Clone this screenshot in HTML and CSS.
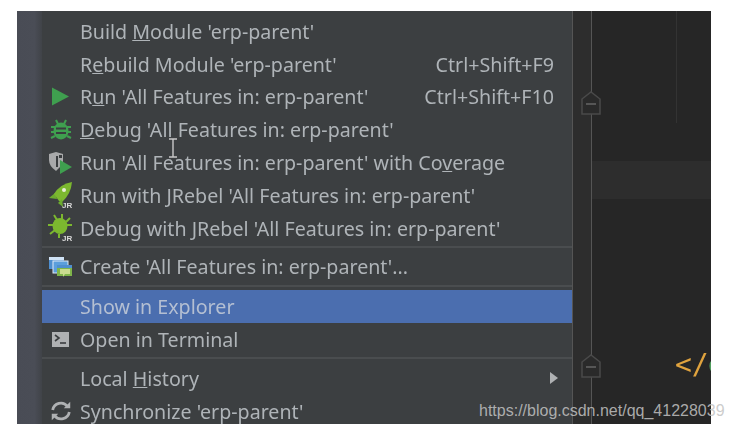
FILE: index.html
```html
<!DOCTYPE html>
<html lang="en">
<head>
    <meta charset="UTF-8">
    <title>Context menu</title>
    <link rel="stylesheet" href="styles.css">
</head>
<body>
    <div class="frame">
        <div class="strip"></div>
        <ul class="menu">
            <li class="row first"><span class="slot"></span><span class="label">Build <u>M</u>odule 'erp-parent'</span></li>
            <li class="row"><span class="slot"></span><span class="label">R<u>e</u>build Module 'erp-parent'</span><span class="keys">Ctrl+Shift+F9</span></li>
            <li class="row">
                <span class="slot"><svg width="26" height="26" viewBox="0 0 26 26"><path d="M4 3.5 L21 12.5 L4 21.5 Z" fill="#3f9f4f"/></svg></span>
                <span class="label">R<u>u</u>n 'All Features in: erp-parent'</span><span class="keys">Ctrl+Shift+F10</span>
            </li>
            <li class="row">
                <span class="slot"><svg width="26" height="26" viewBox="0 0 26 26"><g stroke="#3f9f4f" stroke-width="2" fill="none"><path d="M8 3 L10 7 M18 3 L16 7 M3 10 H7 M23 10 H19 M3 15 H7 M23 15 H19 M3 21 L7 19 M23 21 L19 19"/></g><ellipse cx="13" cy="14" rx="7.5" ry="8.5" fill="#3f9f4f"/><path d="M8 11.5 H18 M8 16 H18" stroke="#3a3d3f" stroke-width="2"/></svg></span>
                <span class="label"><u>D</u>ebug 'All Features in: erp-parent'</span>
            </li>
            <li class="row">
                <span class="slot"><svg width="26" height="26" viewBox="0 0 26 26"><path d="M1 4 L8 2 L15 4 V14 L8 21 Q1 16 1 10 Z" fill="#a8a9aa"/><path d="M11 5 H14 V8 H11 Z" fill="#3a3d3f"/><path d="M10 6 V17 H8 V6 Z" fill="#3a3d3f"/><path d="M12 10 L24 17 L12 24 Z" fill="#3f9f4f"/></svg></span>
                <span class="label">Run 'All Features in: erp-parent' with Co<u>v</u>erage</span>
            </li>
            <li class="row">
                <span class="slot"><svg width="28" height="28" viewBox="0 0 28 28"><path d="M2 17 L8 12 L10 18 Z" fill="#6cab2f"/><path d="M7 13 Q13 3 25 1 Q24 13 15 21 L12 20 Z" fill="#7cb82f"/><path d="M11 22 L15 18 L16 26 Z" fill="#6cab2f"/><circle cx="17" cy="9" r="2" fill="#e8eed8"/><text class="jr" x="15" y="27">JR</text></svg></span>
                <span class="label">Run with JRebel 'All Features in: erp-parent'</span>
            </li>
            <li class="row">
                <span class="slot"><svg width="28" height="28" viewBox="0 0 28 28"><g stroke="#7cb82f" stroke-width="2" fill="none"><path d="M7 1 L10 6 M15 0 V5 M23 4 L19 8 M1 11 H6 M25 11 H20 M3 20 L8 16 M12 24 L12 20"/></g><ellipse cx="13" cy="12" rx="7.5" ry="8" fill="#7cb82f"/><text class="jr" x="15" y="27">JR</text></svg></span>
                <span class="label">Debug with JRebel 'All Features in: erp-parent'</span>
            </li>
            <li class="sep"></li>
            <li class="row">
                <span class="slot"><svg width="26" height="26" viewBox="0 0 26 26"><rect x="1" y="3" width="15" height="12" fill="#4f8fcf"/><rect x="1" y="3" width="15" height="3" fill="#cfe2f5"/><rect x="5" y="7" width="15" height="12" fill="#5c9fdc" stroke="#dfeaf5"/><rect x="9" y="11" width="15" height="11" fill="#7fb54a"/><rect x="9" y="11" width="15" height="3" fill="#4f8fcf"/><path d="M12 15 H22 V20 H17 L15 23 V20 H12 Z" fill="#c9dc8f"/></svg></span>
                <span class="label">Create 'All Features in: erp-parent'...</span>
            </li>
            <li class="sep sep-wide"></li>
            <li class="row active"><span class="slot"></span><span class="label">Show in Explorer</span></li>
            <li class="row">
                <span class="slot"><svg width="26" height="26" viewBox="0 0 26 26"><rect x="4" y="5" width="17" height="15" fill="#afb1b3"/><path d="M7 8 L11 11 L7 14" stroke="#3a3d3f" stroke-width="1.6" fill="none"/><path d="M12 16 H18" stroke="#3a3d3f" stroke-width="1.6"/></svg></span>
                <span class="label">Open in Terminal</span>
            </li>
            <li class="sep"></li>
            <li class="row"><span class="slot"></span><span class="label">Local <u>H</u>istory</span><span class="arrow"></span></li>
            <li class="row">
                <span class="slot"><svg width="24" height="24" viewBox="0 0 26 26"><g stroke="#afb1b3" stroke-width="3" fill="none"><path d="M4 12 A9 9 0 0 1 20 8"/><path d="M22 14 A9 9 0 0 1 6 18"/></g><path d="M16 10 H23 V3 Z M10 16 H3 V23 Z" fill="#afb1b3"/></svg></span>
                <span class="label">Synchronize 'erp-parent'</span>
            </li>
        </ul>
        <div class="fold-gutter"></div>
        <div class="editor">
            <div class="guide"></div>
            <div class="band"></div>
            <div class="code"><span class="tag">&lt;/</span><span class="name">e</span></div>
        </div>
        <svg class="fold fold-top" width="32" height="26" viewBox="0 0 32 26"><path d="M7 9 L16 2 L25 9 V24 H7 Z" fill="#2a2a2a" stroke="#4a4a4a" stroke-width="1.5"/><path d="M11 14 H21" stroke="#666" stroke-width="1.5"/></svg>
        <svg class="fold fold-bottom" width="32" height="26" viewBox="0 0 32 26"><path d="M7 9 L16 2 L25 9 V24 H7 Z" fill="#2a2a2a" stroke="#4a4a4a" stroke-width="1.5"/><path d="M11 14 H21" stroke="#666" stroke-width="1.5"/></svg>
        <svg class="ibeam" width="10" height="20" viewBox="0 0 10 20"><path d="M1 1 H9 M5 1 V19 M1 19 H9" stroke="#c8c8c8" stroke-width="1.4" fill="none"/></svg>
    </div>
    <div class="watermark">https://blog.csdn.net/qq_41228039</div>
</body>
</html>
```

FILE: styles.css
```css
body {
    margin: 0;
    background: #fff;
    height: 431px;
    overflow: hidden;
    position: relative;
    font-family: "Noto Sans", sans-serif;
}
.frame {
    display: flex;
    position: relative;
    width: 694px;
    height: 413px;
    margin: 11px 0 0 17px;
    overflow: hidden;
    background: #3a3d3f;
    filter: blur(0.4px);
}
.strip {
    width: 25px;
    flex: none;
    background: linear-gradient(90deg, #494c55 0%, #4a4d56 70%, #404348 100%);
}
.menu {
    width: 530px;
    flex: none;
    margin: 0;
    padding: 3.5px 0 0;
    list-style: none;
    background: #3c3f41;
    color: #afb4b8;
    font-size: 19.65px;
}
.row {
    display: flex;
    align-items: center;
    box-sizing: border-box;
    height: 32.8px;
    padding-top: 1px;
    white-space: nowrap;
}
.row.active {
    background: #4b6eaf;
    color: #b4bfd2;
}
.slot {
    width: 38px;
    flex: none;
    display: flex;
    justify-content: center;
    align-items: center;
}
.label {
    flex: 1;
}
.keys {
    margin-right: 18px;
}
.arrow {
    width: 0;
    height: 0;
    margin-right: 14px;
    border-left: 8px solid #afb1b3;
    border-top: 6px solid transparent;
    border-bottom: 6px solid transparent;
}
.sep {
    height: 6px;
    display: flex;
    align-items: center;
}
.sep-wide {
    height: 7px;
}
.sep::before {
    content: "";
    flex: 1;
    height: 2px;
    background: #4a4d4f;
}
.jr {
    font: bold 8px "Liberation Sans", sans-serif;
    fill: #d8d8d8;
}
.fold-gutter {
    width: 18px;
    flex: none;
    background: #2d2d2d;
    border-left: 1px solid #555;
    border-right: 1px solid #555;
}
.editor {
    flex: 1;
    position: relative;
    background: #262626;
}
.guide {
    position: absolute;
    left: 84px;
    top: 0;
    height: 112px;
    width: 1px;
    background: #333;
}
.band {
    position: absolute;
    left: 0;
    right: 0;
    top: 150px;
    height: 38px;
    background: #2d2d2d;
}
.code {
    position: absolute;
    left: 83px;
    top: 337px;
    font: 28px "DejaVu Sans Mono", monospace;
    white-space: nowrap;
}
.tag {
    color: #e0a33e;
}
.name {
    margin-left: -1px;
    color: #4f9d5d;
}
.fold {
    position: absolute;
    left: 558px;
}
.fold-top {
    top: 79px;
}
.fold-bottom {
    top: 342px;
}
.ibeam {
    position: absolute;
    left: 151px;
    top: 127px;
}
.watermark {
    position: absolute;
    left: 479px;
    top: 402px;
    font: 16px "Liberation Sans", sans-serif;
    color: rgba(195, 195, 195, 0.85);
    white-space: nowrap;
}
```
